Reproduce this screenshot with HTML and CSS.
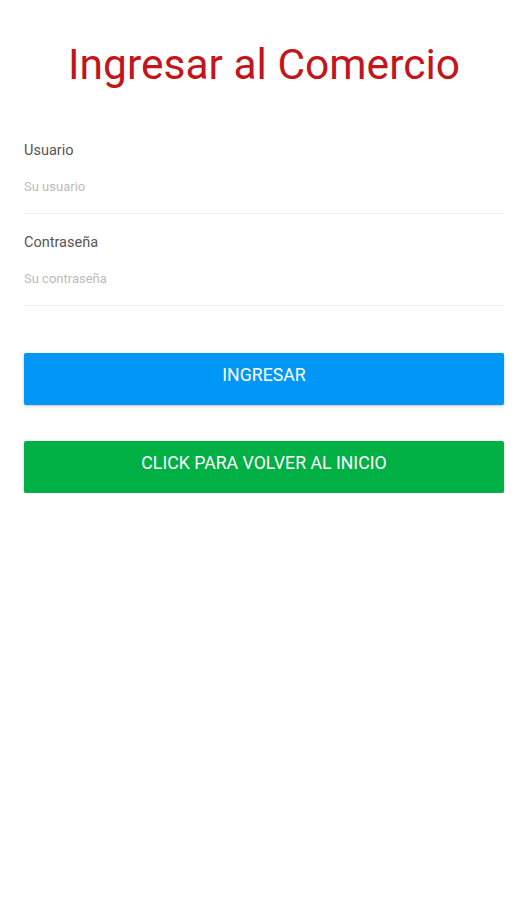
FILE: index.html
```html
<!DOCTYPE html>
<html lang="es">
<head>
    <meta charset="UTF-8">
    <meta name="viewport" content="width=device-width, initial-scale=1.0">
    <title>Ingresar al Comercio</title>
    <link rel="stylesheet" href="styles.css">
</head>
<body>
    <div class="container">
        <h1>Ingresar al Comercio</h1>

        <div class="field">
            <label for="usuario">Usuario</label>
            <input type="text" id="usuario" placeholder="Su usuario">
        </div>

        <div class="field">
            <label for="password">Contraseña</label>
            <input type="password" id="password" placeholder="Su contraseña">
        </div>

        <div class="actions">
            <button class="btn btn-blue">INGRESAR</button>
            <button class="btn btn-green">CLICK PARA VOLVER AL INICIO</button>
        </div>
    </div>
</body>
</html>
```

FILE: styles.css
```css
body {
    font-family: Roboto, 'Noto Sans', sans-serif;
    background-color: #fff;
    color: #555;
    margin: 0;
    padding: 0;
}

.container {
    padding: 0 23px 0 24px;
}

h1 {
    margin: 0;
    padding-top: 39px;
    text-align: center;
    color: #c4141c;
    font-size: 42.5px;
    font-weight: 400;
    line-height: 52px;
}

.field {
    display: flex;
    flex-direction: column;
    border-bottom: 1px solid #eee;
}

.field:first-of-type {
    margin-top: 50px;
}

.field + .field {
    margin-top: 19px;
}

label {
    font-size: 14.5px;
    line-height: 20px;
    color: #555;
}

input {
    border: none;
    outline: none;
    padding: 0;
    margin: 16px 0;
    font-family: inherit;
    font-size: 13px;
    line-height: 20px;
    height: 20px;
    color: #555;
}

input::placeholder {
    color: #bbb;
}

.actions {
    display: flex;
    flex-direction: column;
    gap: 36px;
    margin-top: 47px;
}

.btn {
    height: 52px;
    border: none;
    border-radius: 2px;
    color: #fff;
    font-family: inherit;
    font-size: 17.7px;
    padding: 0 0 8px;
    box-shadow: 0 1px 3px rgba(0, 0, 0, 0.25);
    cursor: pointer;
}

.btn-blue {
    background-color: #0197f6;
}

.btn-green {
    background-color: #00b045;
}
```
